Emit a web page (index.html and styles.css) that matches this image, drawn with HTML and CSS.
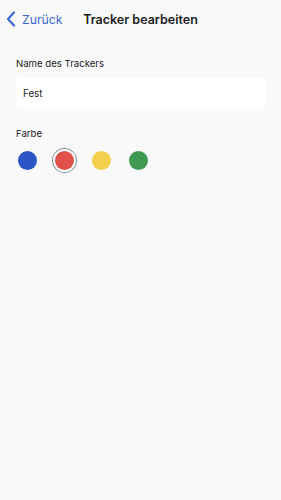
FILE: index.html
```html
<!DOCTYPE html>
<html>

<head>
    <title>Tracker bearbeiten</title>
    <link rel="stylesheet" href="styles.css">
</head>

<body>
    <div class="navbar">
        <a class="back" href="#">
            <svg class="chevron" width="10" height="16" viewBox="0 0 10 16">
                <path d="M8 1.5 L2 8 L8 14.5" fill="none" stroke="#3a69d4" stroke-width="2.2" stroke-linecap="round" stroke-linejoin="round"/>
            </svg>
            Zurück
        </a>
        <h1>Tracker bearbeiten</h1>
    </div>

    <div class="content">
        <label class="label" for="name">Name des Trackers</label>
        <input class="field" id="name" type="text" value="Fest">

        <div class="label farbe">Farbe</div>
        <div class="colors">
            <span class="dot blue"></span>
            <span class="dot red selected"></span>
            <span class="dot yellow"></span>
            <span class="dot green"></span>
        </div>
    </div>
</body>

</html>
```

FILE: styles.css
```css
body {
    margin: 0;
    height: 500px;
    background-color: #f9f9f9;
    font-family: Inter, "Liberation Sans", sans-serif;
    color: #1c1c1e;
}

.navbar {
    position: relative;
    height: 38px;
    display: flex;
    align-items: center;
    justify-content: center;
}

.back {
    position: absolute;
    left: 6px;
    top: 11px;
    display: flex;
    align-items: center;
    gap: 6px;
    color: #3a69d4;
    text-decoration: none;
    font-size: 12.25px;
}

.navbar h1 {
    margin: 0;
    font-size: 12.5px;
    font-weight: 600;
}

.content {
    padding: 20px 15px 0 16px;
    display: flex;
    flex-direction: column;
}

.label {
    font-size: 9.6px;
    color: #222;
    margin-bottom: 9px;
}

.field {
    box-sizing: border-box;
    height: 31px;
    border: none;
    border-radius: 5px;
    background: #fff;
    padding: 0 7px;
    font-family: inherit;
    font-size: 9.8px;
    color: #222;
    outline: none;
}

.farbe {
    margin-top: 19px;
    margin-bottom: 9px;
}

.colors {
    display: flex;
    gap: 18px;
    align-items: center;
    padding-left: 2px;
}

.dot {
    width: 19px;
    height: 19px;
    border-radius: 50%;
    display: inline-block;
    margin: 3px 0;
}

.blue {
    background-color: #2c56c6;
}

.red {
    background-color: #e0514b;
}

.yellow {
    background-color: #f4cf4c;
}

.green {
    background-color: #3e9a50;
}

.selected {
    box-shadow: 0 0 0 2px #fff, 0 0 0 3px #8e8e93;
}
```
